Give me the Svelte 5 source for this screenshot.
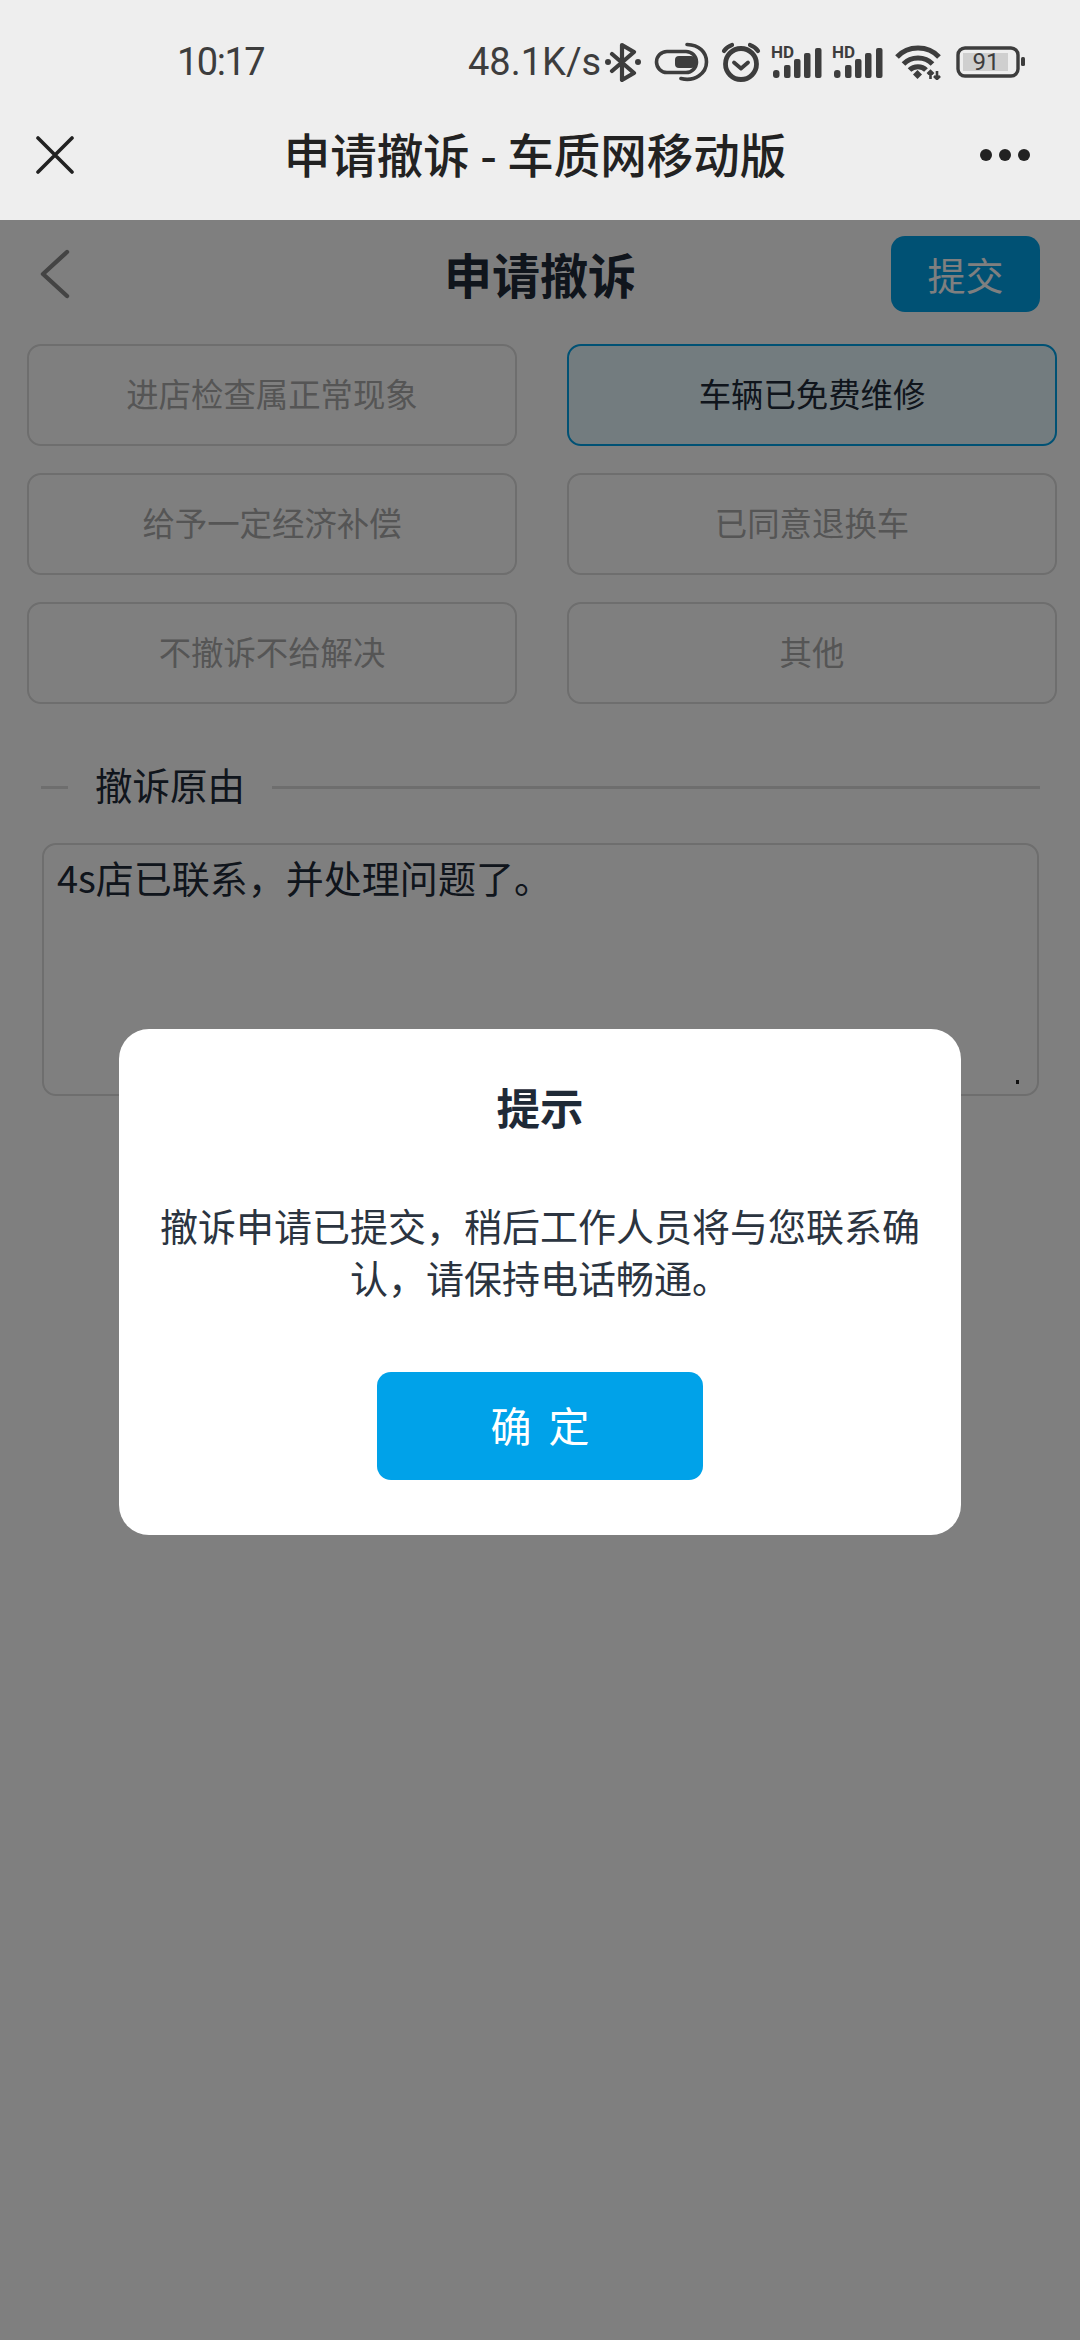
<script>
  const options = [
    { label: '进店检查属正常现象' },
    { label: '车辆已免费维修', selected: true },
    { label: '给予一定经济补偿' },
    { label: '已同意退换车' },
    { label: '不撤诉不给解决' },
    { label: '其他' }
  ];
  const bars = [
    { x: 2, y: 27, h: 8, r: 3 },
    { x: 13, y: 22, h: 13, r: 2 },
    { x: 23, y: 16, h: 19, r: 2 },
    { x: 33, y: 10, h: 25, r: 2 },
    { x: 44, y: 5, h: 30, r: 2 }
  ];
</script>

{#snippet signal()}
  <svg class="signal" width="51" height="38" viewBox="0 0 51 38">
    <text x="0" y="15" class="hd">HD</text>
    {#each bars as b}
      <rect x={b.x} y={b.y} width="6.500" height={b.h} rx={b.r} fill="#3d3d3d" />
    {/each}
  </svg>
{/snippet}

<div class="screen">
  <header class="chrome">
    <div class="status">
      <span class="time">10:17</span>
      <span class="speed">48.1K/s</span>
      <svg class="bt" width="36" height="40" viewBox="0 0 36 40" fill="none" stroke="#3d3d3d" stroke-width="4.200" stroke-linejoin="round" stroke-linecap="round">
        <path d="M7 12 29 31 17 38V3L29 10 7 29" />
        <circle cx="3" cy="20" r="3" fill="#3d3d3d" stroke="none" />
        <circle cx="33" cy="20" r="3" fill="#3d3d3d" stroke="none" />
      </svg>
      <svg class="toggle" width="55" height="40" viewBox="0 0 55 40" fill="none" stroke="#3d3d3d" stroke-width="3.600" stroke-linecap="round">
        <rect x="2.500" y="9.500" width="40" height="21" rx="10.500" />
        <rect x="21" y="14" width="20" height="12" rx="4" fill="#3d3d3d" stroke="none" />
        <path d="M33 2.500C45 3 52.500 10 52.500 20 52.500 31 41 40 27 36.500" />
      </svg>
      <svg class="alarm" width="40" height="40" viewBox="0 0 40 40" fill="none" stroke="#3d3d3d" stroke-linecap="round" stroke-linejoin="round">
        <circle cx="20" cy="22" r="15.500" stroke-width="4.800" />
        <path d="M13 20.500 20 26.500 27 20.500" stroke-width="3.800" />
        <path d="M3 9C5 6 8 4 11 3M37 9C35 6 32 4 29 3" stroke-width="4.200" />
      </svg>
      {@render signal()}
      {@render signal()}
      <svg class="wifi" width="48" height="36" viewBox="0 0 48 36" fill="none" stroke="#3d3d3d" stroke-width="5">
        <path d="M3 13C14 1 34 1 45 13" />
        <path d="M9.500 20C17 12 31 12 38.500 20" />
        <path d="M15.500 26C20 21.500 28 21.500 32 26" />
        <path d="M23.500 26 28 30.500 23.500 35 19 30.500Z" fill="#3d3d3d" stroke="none" />
        <path d="M36.500 35V27.500M33.500 30 36.500 27 39.500 30M43 27V34.500M40 32 43 35 46 32" stroke-width="2.600" />
      </svg>
      <svg class="battery" width="69" height="32" viewBox="0 0 69 32">
        <rect x="2" y="2" width="60" height="28" rx="7" fill="none" stroke="#3d3d3d" stroke-width="3.400" />
        <rect x="7" y="7" width="45" height="18" fill="#cfcfcf" />
        <rect x="65" y="11" width="4" height="9" rx="1.500" fill="#3d3d3d" />
        <text x="30" y="24" text-anchor="middle" class="level">91</text>
      </svg>
    </div>
    <div class="bar">
      <svg class="close" width="38" height="38" viewBox="0 0 38 38" stroke="#222" stroke-width="3.600" stroke-linecap="round">
        <path d="M2 2 36 36M36 2 2 36" />
      </svg>
      <h1>申请撤诉 - 车质网移动版</h1>
      <div class="dots"><i></i><i></i><i></i></div>
    </div>
  </header>

  <main class="page">
    <nav class="nav">
      <svg class="back" width="32" height="50" viewBox="0 0 32 50" fill="none" stroke="#888" stroke-width="4.400" stroke-linecap="round" stroke-linejoin="round">
        <path d="M27 3 3 25 27 47" />
      </svg>
      <h2>申请撤诉</h2>
      <button class="submit">提交</button>
    </nav>

    <div class="options">
      {#each options as o}
        <div class="option" class:selected={o.selected}>{o.label}</div>
      {/each}
    </div>

    <div class="legend">
      <span class="rule short"></span>
      <span class="legend-text">撤诉原由</span>
      <span class="rule"></span>
    </div>

    <div class="reason">
      4s店已联系，并处理问题了。
      <span class="grip"></span>
    </div>
  </main>

  <div class="overlay">
    <div class="dialog" role="dialog">
      <h3>提示</h3>
      <p>撤诉申请已提交，稍后工作人员将与您联系确认，请保持电话畅通。</p>
      <button class="confirm">确 定</button>
    </div>
  </div>
</div>

<style>
  :global(body) {
    margin: 0;
    background: #fff;
  }
  .screen {
    position: relative;
    width: 1080px;
    height: 2340px;
    overflow: hidden;
    font-family: "Noto Sans CJK SC", "Noto Sans", sans-serif;
    background: #fff;
  }
  .chrome {
    height: 220px;
    background: #eeeeee;
  }
  .status {
    display: flex;
    align-items: center;
    height: 38px;
    padding: 43px 0 19px 177px;
    color: #3d3d3d;
    font-family: Roboto, "Noto Sans", sans-serif;
    font-size: 38px;
  }
  .status svg {
    flex: none;
  }
  .time {
    width: 85px;
    letter-spacing: -1.500px;
  }
  .speed {
    margin-left: 206px;
    width: 131px;
    white-space: nowrap;
  }
  .bt {
    margin-left: 6px;
  }
  .toggle {
    margin-left: 13px;
  }
  .alarm {
    margin-left: 12px;
  }
  .signal {
    margin-left: 10px;
  }
  .signal + .signal {
    margin-left: 10px;
  }
  .hd {
    font-family: Roboto, sans-serif;
    font-size: 17px;
    font-weight: 700;
    fill: #3d3d3d;
  }
  .wifi {
    margin-left: 11px;
  }
  .battery {
    margin-left: 14px;
  }
  .level {
    font-family: Roboto, sans-serif;
    font-size: 24px;
    fill: #3d3d3d;
  }
  .bar {
    display: grid;
    grid-template-columns: 1fr auto 1fr;
    align-items: center;
    height: 110px;
    padding: 0 50px 0 36px;
  }
  .bar h1 {
    margin: 0 0 5px 4px;
    font-size: 46.500px;
    font-weight: 500;
    color: #222;
    line-height: 60px;
  }
  .dots {
    display: flex;
    justify-content: flex-end;
    gap: 7px;
  }
  .dots i {
    width: 12px;
    height: 12px;
    border-radius: 50%;
    background: #222;
  }
  .page {
    padding-top: 16px;
  }
  .nav {
    display: grid;
    grid-template-columns: 1fr auto 1fr;
    align-items: center;
    height: 76px;
    padding: 0 40px 0 40px;
    margin-bottom: 32px;
  }
  .nav h2 {
    margin: 0 0 3px;
    font-size: 48px;
    font-weight: 700;
    line-height: 60px;
    color: #202a38;
  }
  .submit {
    justify-self: end;
    width: 149px;
    height: 76px;
    border: 0;
    border-radius: 14px;
    background: #00a2e9;
    color: #fff;
    font-family: inherit;
    font-size: 38px;
    padding: 0 0 2px;
  }
  .options {
    display: grid;
    grid-template-columns: 490px 490px;
    column-gap: 50px;
    row-gap: 27px;
    padding-left: 27px;
  }
  .option {
    box-sizing: border-box;
    height: 102px;
    padding-bottom: 5px;
    display: flex;
    align-items: center;
    justify-content: center;
    border: 2px solid #dcdcdc;
    border-radius: 14px;
    font-size: 32.400px;
    color: #aaa;
  }
  .option.selected {
    border-color: #00a2e9;
    background: #e6f9ff;
    color: #202a38;
  }
  .legend {
    display: flex;
    align-items: center;
    gap: 27px;
    height: 50px;
    margin: 55px 40px 34px 41px;
  }
  .legend-text {
    font-size: 37.500px;
    line-height: 50px;
    color: #202a38;
  }
  .rule {
    flex: 1;
    height: 3px;
    margin-top: 6px;
    background: #dcdcdc;
  }
  .rule.short {
    flex: none;
    width: 27px;
  }
  .reason {
    position: relative;
    box-sizing: border-box;
    width: 997px;
    height: 253px;
    margin-left: 42px;
    padding: 7px 13px;
    border: 2px solid #dcdcdc;
    border-radius: 14px;
    font-size: 38px;
    line-height: 50px;
    color: #202a38;
  }
  .grip {
    position: absolute;
    right: 18px;
    bottom: 10px;
    width: 3px;
    height: 4px;
    background: #222;
  }
  .overlay {
    position: absolute;
    inset: 220px 0 0 0;
    box-sizing: border-box;
    padding-top: 4px;
    display: flex;
    align-items: center;
    justify-content: center;
    background: rgba(0, 0, 0, 0.5);
  }
  .dialog {
    box-sizing: border-box;
    width: 842px;
    height: 506px;
    padding: 50px 40px 0;
    border-radius: 30px;
    background: #fff;
    text-align: center;
    color: #2b3440;
  }
  .dialog h3 {
    margin: 0;
    font-size: 43.500px;
    font-weight: 700;
    line-height: 56px;
    color: #1f2a37;
  }
  .dialog p {
    margin: 64px 0 69px;
    font-size: 38px;
    line-height: 52px;
  }
  .confirm {
    width: 326px;
    height: 108px;
    border: 0;
    border-radius: 14px;
    background: #00a2e9;
    color: #fff;
    font-family: inherit;
    font-size: 41px;
    letter-spacing: 4px;
    padding: 0 0 5px 4px;
  }
</style>
